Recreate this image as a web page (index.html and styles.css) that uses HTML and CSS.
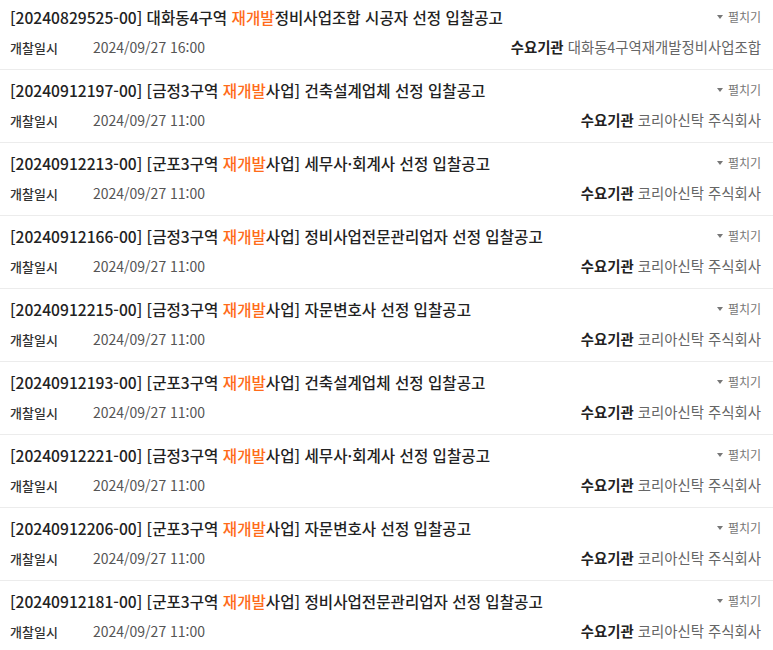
FILE: index.html
```html
<!DOCTYPE html>
<html lang="ko">
<head>
<meta charset="utf-8">
<link rel="stylesheet" href="styles.css">
</head>
<body>
<ul class="list">
  <li class="item">
    <div class="head"><p class="title">[20240829525-00] 대화동4구역 <em>재개발</em>정비사업조합 시공자 선정 입찰공고</p><span class="toggle"><i class="tri"></i>펼치기</span></div>
    <div class="info"><p class="date"><b>개찰일시</b><span>2024/09/27 16:00</span></p><p class="org"><b>수요기관</b> 대화동4구역재개발정비사업조합</p></div>
  </li>
  <li class="item">
    <div class="head"><p class="title">[20240912197-00] [금정3구역 <em>재개발</em>사업] 건축설계업체 선정 입찰공고</p><span class="toggle"><i class="tri"></i>펼치기</span></div>
    <div class="info"><p class="date"><b>개찰일시</b><span>2024/09/27 11:00</span></p><p class="org"><b>수요기관</b> 코리아신탁 주식회사</p></div>
  </li>
  <li class="item">
    <div class="head"><p class="title">[20240912213-00] [군포3구역 <em>재개발</em>사업] 세무사·회계사 선정 입찰공고</p><span class="toggle"><i class="tri"></i>펼치기</span></div>
    <div class="info"><p class="date"><b>개찰일시</b><span>2024/09/27 11:00</span></p><p class="org"><b>수요기관</b> 코리아신탁 주식회사</p></div>
  </li>
  <li class="item">
    <div class="head"><p class="title">[20240912166-00] [금정3구역 <em>재개발</em>사업] 정비사업전문관리업자 선정 입찰공고</p><span class="toggle"><i class="tri"></i>펼치기</span></div>
    <div class="info"><p class="date"><b>개찰일시</b><span>2024/09/27 11:00</span></p><p class="org"><b>수요기관</b> 코리아신탁 주식회사</p></div>
  </li>
  <li class="item">
    <div class="head"><p class="title">[20240912215-00] [금정3구역 <em>재개발</em>사업] 자문변호사 선정 입찰공고</p><span class="toggle"><i class="tri"></i>펼치기</span></div>
    <div class="info"><p class="date"><b>개찰일시</b><span>2024/09/27 11:00</span></p><p class="org"><b>수요기관</b> 코리아신탁 주식회사</p></div>
  </li>
  <li class="item">
    <div class="head"><p class="title">[20240912193-00] [군포3구역 <em>재개발</em>사업] 건축설계업체 선정 입찰공고</p><span class="toggle"><i class="tri"></i>펼치기</span></div>
    <div class="info"><p class="date"><b>개찰일시</b><span>2024/09/27 11:00</span></p><p class="org"><b>수요기관</b> 코리아신탁 주식회사</p></div>
  </li>
  <li class="item">
    <div class="head"><p class="title">[20240912221-00] [금정3구역 <em>재개발</em>사업] 세무사·회계사 선정 입찰공고</p><span class="toggle"><i class="tri"></i>펼치기</span></div>
    <div class="info"><p class="date"><b>개찰일시</b><span>2024/09/27 11:00</span></p><p class="org"><b>수요기관</b> 코리아신탁 주식회사</p></div>
  </li>
  <li class="item">
    <div class="head"><p class="title">[20240912206-00] [군포3구역 <em>재개발</em>사업] 자문변호사 선정 입찰공고</p><span class="toggle"><i class="tri"></i>펼치기</span></div>
    <div class="info"><p class="date"><b>개찰일시</b><span>2024/09/27 11:00</span></p><p class="org"><b>수요기관</b> 코리아신탁 주식회사</p></div>
  </li>
  <li class="item">
    <div class="head"><p class="title">[20240912181-00] [군포3구역 <em>재개발</em>사업] 정비사업전문관리업자 선정 입찰공고</p><span class="toggle"><i class="tri"></i>펼치기</span></div>
    <div class="info"><p class="date"><b>개찰일시</b><span>2024/09/27 11:00</span></p><p class="org"><b>수요기관</b> 코리아신탁 주식회사</p></div>
  </li>
</ul>
</body>
</html>
```
FILE: styles.css
```css
* { box-sizing: border-box; }
html, body { margin: 0; padding: 0; background: #fff; }
body {
  font-family: "Noto Sans CJK KR", "Noto Sans", sans-serif;
  color: #222;
  overflow: hidden;
}
p { margin: 0; }
.list { list-style: none; margin: -3px 0 0; padding: 0; }
.item {
  padding: 10px 12px 12px 10px;
  border-bottom: 1px solid #ececec;
}
.head {
  display: flex;
  justify-content: space-between;
  align-items: center;
  height: 20px;
  margin-bottom: 10px;
}
.title {
  font-size: 15.6px;
  line-height: 20px;
  font-weight: 500;
  color: #222;
  white-space: nowrap;
}
.title em { font-style: normal; color: #ff6b1a; }
.toggle {
  display: flex;
  align-items: center;
  font-size: 12px;
  color: #777;
  line-height: 20px;
}
.tri {
  width: 0; height: 0;
  border-left: 3.5px solid transparent;
  border-right: 3.5px solid transparent;
  border-top: 4px solid #777;
  margin-right: 5px;
}
.info {
  display: flex;
  justify-content: space-between;
  align-items: center;
  height: 20px;
  font-size: 14px;
  line-height: 20px;
}
.date { display: flex; align-items: baseline; }
.date b { font-size: 13px; font-weight: 500; color: #333; width: 83px; }
.date span { color: #555; }
.org { color: #666; font-size: 14.4px; }
.org b { font-weight: 700; color: #222; }
```
